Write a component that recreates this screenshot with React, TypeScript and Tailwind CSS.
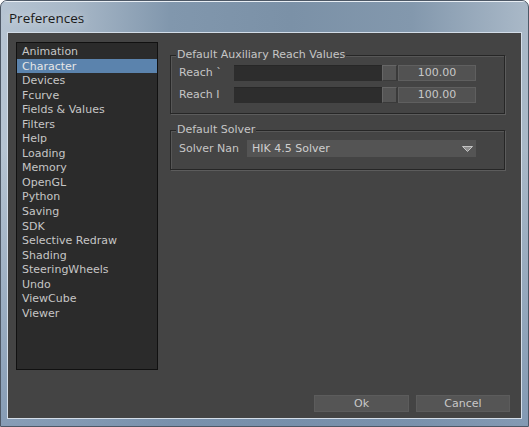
import React from "react";

const items = [
  "Animation",
  "Character",
  "Devices",
  "Fcurve",
  "Fields & Values",
  "Filters",
  "Help",
  "Loading",
  "Memory",
  "OpenGL",
  "Python",
  "Saving",
  "SDK",
  "Selective Redraw",
  "Shading",
  "SteeringWheels",
  "Undo",
  "ViewCube",
  "Viewer",
];

function SliderRow({ label }: { label: string }) {
  return (
    <div className="flex items-center h-[16px]">
      <div className="w-[55px] shrink-0 ml-[8px] whitespace-nowrap leading-[16px]">{label}</div>
      <div className="w-[148px] shrink-0 h-[16px] bg-[#2d2d2d] border-t border-[#272727]" />
      <div className="w-[15px] shrink-0 h-[16px] bg-[#555555] border border-t-[#666666] border-l-[#666666] border-r-[#3a3a3a] border-b-[#3a3a3a]" />
      <div className="w-[1px] shrink-0 h-[16px] bg-[#3a3a3a]" />
      <div className="w-[78px] shrink-0 h-[16px] bg-[#525252] border border-[#5f5f5f] flex items-center justify-center leading-[14px] text-[#c8c8c8]">
        100.00
      </div>
    </div>
  );
}

export default function App() {
  return (
    <div
      className="w-[529px] h-[427px] relative overflow-hidden rounded-t-[7px] border border-[#4d5866] flex flex-col"
      style={{
        fontFamily: '"DejaVu Sans", sans-serif',
        background:
          "linear-gradient(to bottom, rgba(120,145,172,0) 0%, rgba(120,145,172,0) 35%, rgba(118,143,172,0.75) 100%), linear-gradient(to right, #b6c4d2 0%, #a7b7c7 14%, #8197ad 32%, #7b91a7 55%, #8398ad 78%, #aab9c8 100%)",
      }}
    >
      {/* title bar */}
      <div className="h-[31px] shrink-0 border-t border-[#e8eef4] flex items-center pl-[8px] pt-[3px]">
        <span
          className="text-[13.5px] text-[#1a1a1a] leading-none"
          style={{ fontFamily: '"Open Sans", sans-serif', textShadow: "0 0 8px rgba(255,255,255,0.7)" }}
        >
          Preferences
        </span>
      </div>

      {/* client area */}
      <div className="mx-[6px] h-[387px] border border-[#d3dde8] bg-[#444444] flex flex-col text-[11px] text-[#c6c6c6]">
        <div className="flex pt-[9px] pl-[8px]">
          {/* list */}
          <div className="w-[142px] h-[328px] shrink-0 border border-[#111111] bg-[#2b2b2b] pt-[1px] overflow-hidden">
            {items.map((it) => (
              <div
                key={it}
                className={
                  "h-[14.55px] leading-[16.5px] pl-[5px] whitespace-nowrap " +
                  (it === "Character" ? "bg-[#5b83ad] text-[#e6e6e6]" : "")
                }
              >
                {it}
              </div>
            ))}
          </div>

          {/* right panel */}
          <div className="ml-[12px] w-[335px] mt-[6px] flex flex-col gap-[9px]">
            <fieldset className="border border-[#262626] shadow-[1px_1px_0_#5c5c5c,inset_1px_1px_0_#575757] pb-[10px]">
              <legend className="ml-[5px] px-[1px] bg-[#444444] leading-[14px]">
                Default Auxiliary Reach Values
              </legend>
              <div className="flex flex-col gap-[6px] mt-[3px]">
                <SliderRow label="Reach `" />
                <SliderRow label="Reach I" />
              </div>
            </fieldset>

            <fieldset className="border border-[#262626] shadow-[1px_1px_0_#5c5c5c,inset_1px_1px_0_#575757] pb-[12px]">
              <legend className="ml-[5px] px-[1px] bg-[#444444] leading-[14px]">Default Solver</legend>
              <div className="flex items-center h-[17px] mt-[3px]">
                <div className="w-[68px] shrink-0 ml-[8px] whitespace-nowrap leading-[19px]">Solver Nan</div>
                <div className="w-[229px] shrink-0 h-[17px] bg-[#545454] flex items-center justify-between pl-[5px] pr-[3px] text-[#cfcfcf]">
                  <span className="leading-[19px]">HIK 4.5 Solver</span>
                  <svg width="11" height="6" viewBox="0 0 11 6">
                    <path d="M0.5 0.5 L10.5 0.5 L5.5 5.5 Z" fill="#8e8e8e" stroke="#c4c4c4" strokeWidth="1" />
                  </svg>
                </div>
              </div>
            </fieldset>
          </div>
        </div>

        {/* buttons */}
        <div className="mt-auto flex justify-end gap-[7px] pr-[11px] pb-[6px]">
          <button className="w-[95px] h-[17px] bg-[#555555] border border-[#5c5c5c] text-[11px] leading-[15px] text-[#c8c8c8]">
            Ok
          </button>
          <button className="w-[94px] h-[17px] bg-[#555555] border border-[#5c5c5c] text-[11px] leading-[15px] text-[#c8c8c8]">
            Cancel
          </button>
        </div>
      </div>
    </div>
  );
}
